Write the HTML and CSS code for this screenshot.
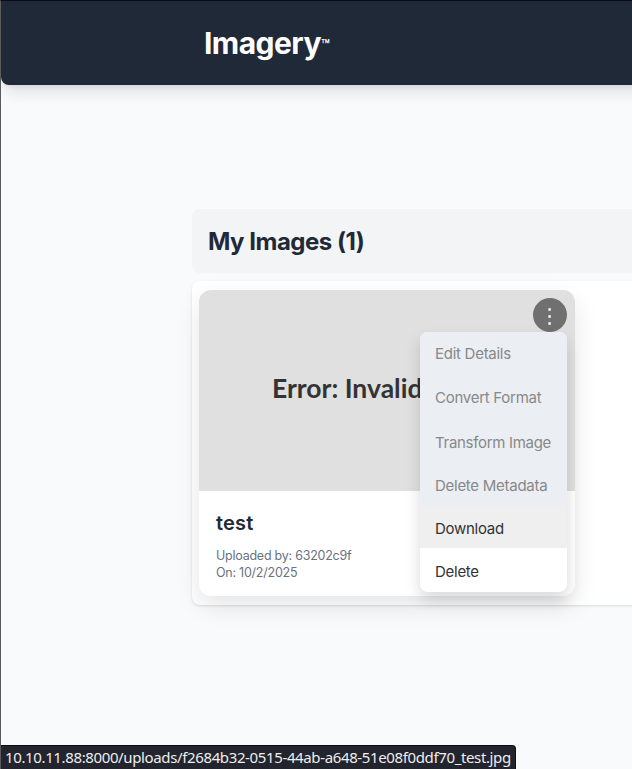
FILE: index.html
```html
<!DOCTYPE html>
<html lang="en">
<head>
<meta charset="utf-8">
<title>Imagery</title>
<link rel="stylesheet" href="styles.css">
</head>
<body>
<header class="topbar"><span class="brand">Imagery</span><span class="tm">™</span></header>
<main class="content">
  <div class="heading"><h1>My Images (1)</h1></div>
  <section class="gallery">
    <article class="card">
      <div class="preview"><span>Error: Invalid</span></div>
      <div class="details">
        <h2>test</h2>
        <p>Uploaded by: 63202c9f</p>
        <p>On: 10/2/2025</p>
      </div>
      <button class="more" aria-label="Options"><svg width="34" height="34" viewBox="0 0 34 34"><path fill="#fff" d="M15.4 10.2h2.4v2.6h-2.4zM15.4 17.2h2.4v2.6h-2.4zM15.4 24.2h2.4v2.6h-2.4z"/></svg></button>
      <div class="menu">
        <div class="item off">Edit Details</div>
        <div class="item off convert">Convert Format</div>
        <div class="item off transform">Transform Image</div>
        <div class="item off metadata">Delete Metadata</div>
        <div class="item hover">Download</div>
        <div class="item last">Delete</div>
      </div>
    </article>
  </section>
</main>
<div class="status"><span>10.10.11.88:8000/uploads/f2684b32-0515-44ab-a648-51e08f0ddf70_test.jpg</span></div>
</body>
</html>
```
FILE: styles.css
```css
* { box-sizing: border-box; }
html { height: 100%; overflow: hidden; }
body {
  margin: 0;
  height: 769px;
  overflow: hidden;
  background: #f9fafb;
  border-left: 1px solid #5c5c5c;
  border-top: 1px solid #0c0d10;
  font-family: Inter, "Liberation Sans", sans-serif;
  color: #1f2937;
}
h1, h2, p { margin: 0; }
.topbar {
  display: flex;
  align-items: center;
  height: 84px;
  margin-right: -20px;
  padding-left: 203px;
  background: #1f2937;
  color: #fff;
  border-bottom-left-radius: 8px;
  box-shadow: 0 10px 15px -3px rgba(0,0,0,.1), 0 4px 6px -4px rgba(0,0,0,.1);
}
.brand { font-size: 30px; font-weight: 700; line-height: 36px; letter-spacing: -.55px; }
.tm { font-size: 14px; font-weight: 600; line-height: 14px; padding-top: 3px; }
.content { padding: 124px 0 0 191px; }
.heading {
  display: flex;
  align-items: center;
  height: 64px;
  padding: 2px 16px 0;
  border-radius: 8px 0 0 8px;
  background: #f3f4f6;
}
.heading h1 { font-size: 24px; line-height: 32px; font-weight: 700; letter-spacing: -.5px; }
.gallery {
  height: 324px;
  margin: 8px -20px 0 0;
  padding: 9px 7px;
  border-radius: 8px 0 0 8px;
  background: #fff;
  box-shadow: 0 1px 3px rgba(0,0,0,.1), 0 1px 2px -1px rgba(0,0,0,.1);
}
.card {
  position: relative;
  width: 376px;
  height: 306px;
  border-radius: 12px;
  background: #fff;
  box-shadow: 0 10px 25px rgba(0,0,0,.1);
}
.preview {
  height: 201px;
  padding: 80px 0 0 73px;
  border-radius: 12px 12px 0 0;
  background: #e0e0e0;
  color: #333;
  font: 700 26.5px/36px Lato, sans-serif;
}
.details { padding: 18px 17px; }
.details h2 { font-size: 20px; line-height: 28px; font-weight: 600; letter-spacing: .2px; margin-bottom: 10px; }
.details p { font-size: 12.5px; line-height: 17px; letter-spacing: -.24px; color: #6b7280; }
.more {
  position: absolute;
  top: 8px;
  right: 8px;
  width: 34px;
  height: 34px;
  padding: 0;
  border: 0;
  border-radius: 50%;
  background: #707070;
}
.more svg { display: block; }
.menu {
  position: absolute;
  top: 42px;
  right: 8px;
  width: 147px;
  height: 260px;
  overflow: hidden;
  border-radius: 8px;
  background: #fff;
  box-shadow: 0 8px 16px rgba(0,0,0,.15);
}
.item {
  height: 43px;
  padding-left: 15px;
  font-size: 15px;
  line-height: 43px;
  letter-spacing: -.27px;
  color: #333;
  white-space: nowrap;
}
.item.convert { height: 45px; line-height: 46px; }
.item.transform { height: 44px; line-height: 46px; letter-spacing: -.3px; }
.item.off { background: #ebeff4; color: #888; }
.item.metadata { height: 42px; }
.item.hover { height: 42px; line-height: 46px; background: #efefef; }
.item.last { height: 44px; line-height: 48px; }
.status {
  position: absolute;
  left: 1px;
  bottom: 0;
  width: 515px;
  height: 24px;
  padding-left: 4px;
  border-top: 1px solid #0c0d10;
  border-right: 1px solid #0c0d10;
  border-top-right-radius: 4px;
  background: #22242e;
  color: #eee;
  font: 15px/23px "Noto Sans", sans-serif;
  letter-spacing: -.37px;
  white-space: nowrap;
}
```
